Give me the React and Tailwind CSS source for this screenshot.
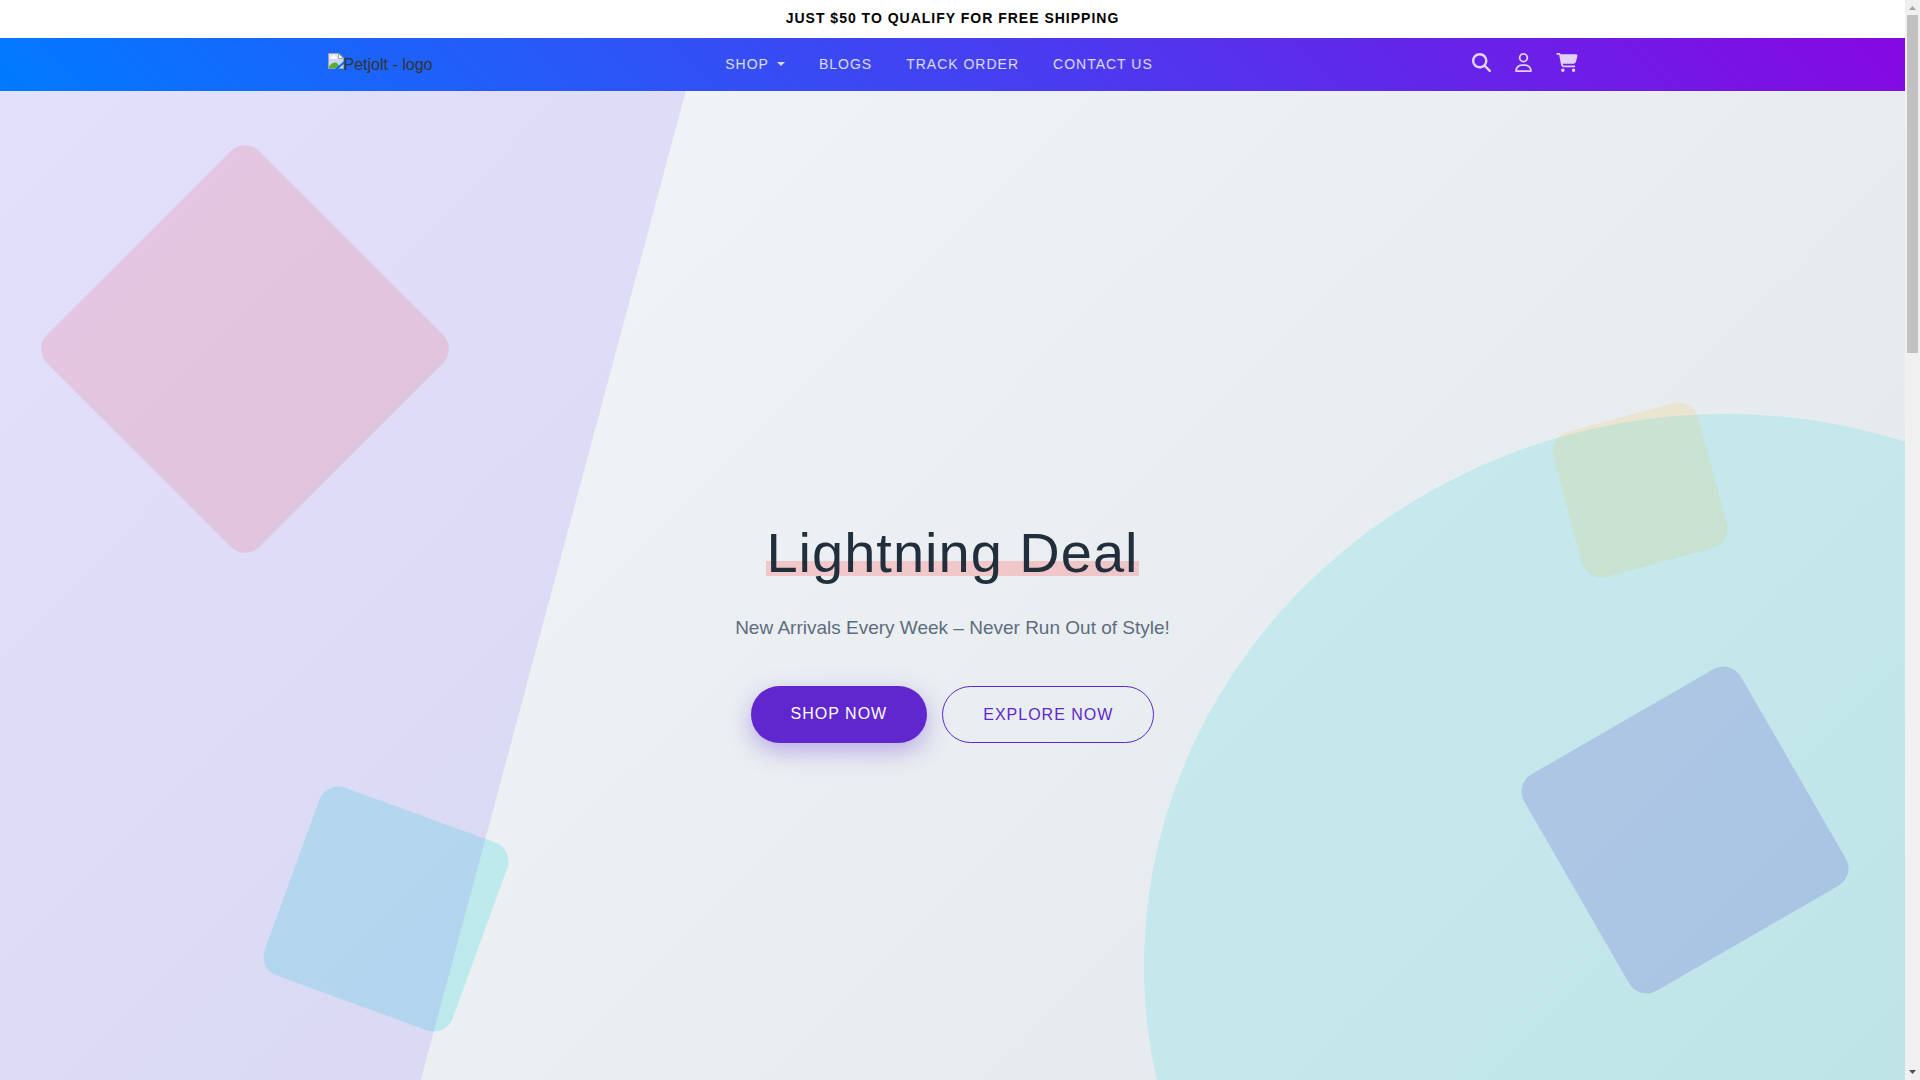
import { FaCartShopping, FaMagnifyingGlass, FaRegUser } from "react-icons/fa6";

const links = [
  { label: "Shop", href: "#shop", hasMenu: true },
  { label: "Blogs", href: "#blogs" },
  { label: "Track Order", href: "#track" },
  { label: "Contact Us", href: "#contact" }
];

const actions = [
  { label: "Search", icon: FaMagnifyingGlass, size: "h-[19px] w-[19px]" },
  { label: "Account", icon: FaRegUser, size: "h-[19px] w-[17px]" },
  { label: "Cart", icon: FaCartShopping, size: "h-[19px] w-[22px]" }
];

const MissingImage = () => (
  <svg viewBox="0 0 16 16" className="h-4 w-4 shrink-0" aria-hidden="true">
    <path d="M0.5 0.5H11L15.5 5V15.5H0.5Z" fill="#c6d8f5" stroke="#a0a0a0" />
    <path d="M1 1H10.7L15 5.3V6H1Z" fill="#dbe7fb" />
    <path d="M3 6a1.5 1.5 0 0 1 1-2.4a2 2 0 0 1 3.6 0A1.3 1.3 0 0 1 7.8 6Z" fill="#fff" />
    <path d="M1 15V13.5C3 11 5 9.6 7 9.6S10.5 11 12 15Z" fill="#5aab35" />
    <path d="M7 16L16 8V10.8L10.2 16Z" fill="#1a66fb" />
    <path d="M10.5 0.5V5.5H15.5Z" fill="#fff" stroke="#a0a0a0" />
  </svg>
);

const Header = () => (
  <header className="bg-[linear-gradient(45deg,#007bff,#8608e1)]">
    <div className="mx-auto flex h-[53px] max-w-[1250px] items-center justify-between">
      <a href="#home" className="flex items-start text-base leading-6 text-[#333333]">
        <MissingImage />
        <span>Petjolt - logo</span>
      </a>

      <nav className="flex items-center gap-[34px] pb-0.5">
        {links.map((link) => (
          <a
            key={link.label}
            href={link.href}
            className="flex items-center text-sm tracking-[1px] text-white/80 uppercase"
          >
            {link.label}
            {link.hasMenu ? (
              <span className="ml-2 border-x-4 border-t-4 border-x-transparent border-t-white/80" />
            ) : null}
          </a>
        ))}
      </nav>

      <div className="flex items-center gap-6 pb-1 pl-[26px]">
        {actions.map((action) => (
          <a key={action.label} href="#" aria-label={action.label} className="text-white/80">
            <action.icon className={action.size} />
          </a>
        ))}
      </div>
    </div>
  </header>
);

const Hero = () => (
  <section className="relative isolate flex h-screen shrink-0 items-center justify-center overflow-hidden bg-[linear-gradient(135deg,#f5f7fa,#dfe6e9)]">
    {/* floating squares */}
    <div className="absolute top-[10%] left-[5%] -z-10 h-[300px] w-[300px] rotate-45 rounded-[20px] bg-[#ff6b6b]/20" />
    <div className="absolute bottom-[15%] left-[15%] -z-10 h-[200px] w-[200px] rotate-20 rounded-[20px] bg-[#00d2d3]/20" />
    <div className="absolute top-[30%] right-[10%] -z-10 h-[150px] w-[150px] -rotate-15 rounded-[20px] bg-[#feca57]/20" />
    <div className="absolute right-[5%] bottom-[20%] -z-10 h-[250px] w-[250px] -rotate-30 rounded-[20px] bg-[#5f27cd]/20" />

    {/* tinted panel and ellipse over them */}
    <div className="absolute inset-y-0 left-0 -z-10 w-[36%] bg-[#8060ff]/15 [clip-path:polygon(0_0,100%_0,57.8%_100%,0_100%)]" />
    <div className="absolute -right-[20%] -bottom-[30%] -z-10 h-full w-3/5 -rotate-10 rounded-[50%] bg-[#08d8de]/15" />

    <div className="flex flex-col items-center text-center">
      <h1 className="relative text-[56px] leading-[67px] tracking-[1px] text-[#212f3d]">
        Lightning Deal
        <span className="absolute bottom-[10px] left-0 -z-10 h-[15px] w-full bg-[#ff6b6b]/30" />
      </h1>
      <p className="mt-6 text-[19px] leading-[36px] text-[#5d6d7e]">
        New Arrivals Every Week – Never Run Out of Style!
      </p>
      <div className="mt-10 flex gap-[15px]">
        <a
          href="#shop"
          className="rounded-full bg-[#5f27cd] px-10 py-[15px] leading-[25px] tracking-[1px] text-white uppercase shadow-[0_8px_25px_rgba(95,39,205,0.35)]"
        >
          Shop Now
        </a>
        <a
          href="#explore"
          className="rounded-full border border-[#5f27cd] px-10 py-[15px] leading-[25px] tracking-[1px] text-[#5f27cd] uppercase"
        >
          Explore Now
        </a>
      </div>
    </div>
  </section>
);

const Scrollbar = () => (
  <aside className="flex w-[15px] shrink-0 flex-col items-center bg-[#f0f0f0]" aria-hidden="true">
    <svg viewBox="0 0 15 15" className="h-[15px] w-[15px]">
      <path d="M4 10L7.5 6L11 10Z" fill="#a3a3a3" />
    </svg>
    <div className="h-[338px] w-[11px] bg-[#c1c1c1]" />
    <svg viewBox="0 0 15 15" className="mt-auto h-[15px] w-[15px]">
      <path d="M4 5L7.5 9L11 5Z" fill="#505050" />
    </svg>
  </aside>
);

const App = () => {
  return (
    <div className="flex h-screen overflow-hidden bg-white font-['Liberation_Sans',Arial,sans-serif]">
      <main className="flex min-w-0 flex-1 flex-col overflow-hidden">
        <p className="pt-2 pb-[10px] text-center text-sm leading-5 font-bold tracking-[1px] text-black">
          JUST $50 TO QUALIFY FOR FREE SHIPPING
        </p>
        <Header />
        <Hero />
      </main>
      <Scrollbar />
    </div>
  );
};

export default App;
